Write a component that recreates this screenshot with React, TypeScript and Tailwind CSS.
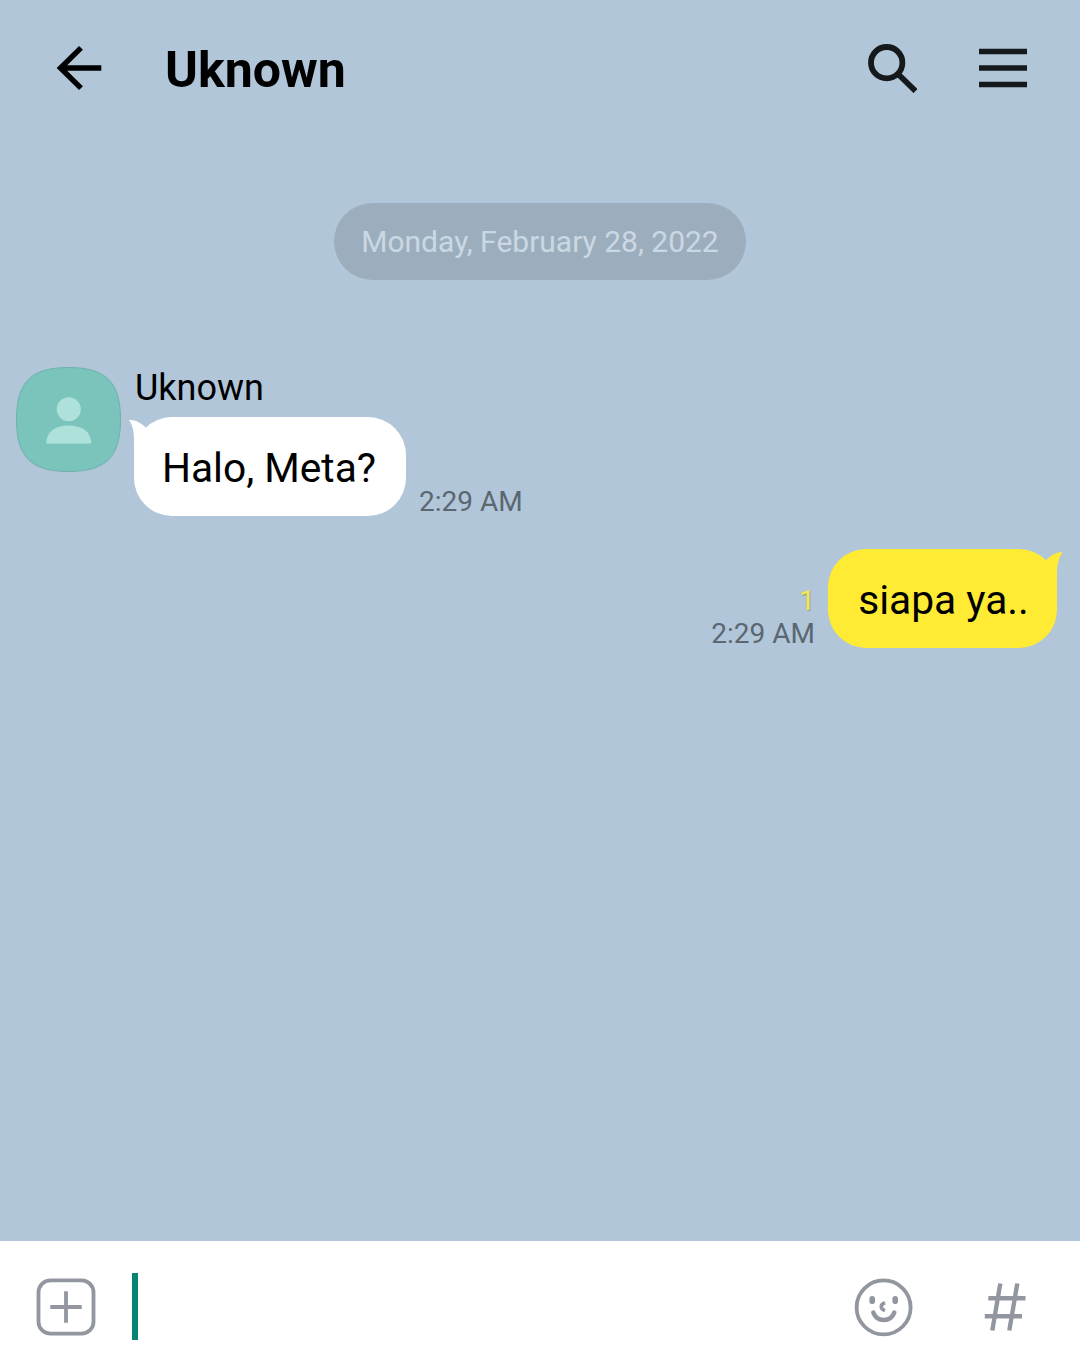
// --- Icons ---
function BackIcon() {
  return (
    <svg width="46" height="46" viewBox="0 0 46 46" fill="none" stroke="#000" strokeWidth="5.4">
      <path d="M45.3 23H5" />
      <path d="M25 2.8L4.5 23 25 43.2" />
    </svg>
  );
}

function SearchIcon() {
  return (
    <svg width="50" height="50" viewBox="0 0 50 50" fill="none" stroke="#16191b" strokeWidth="5.8">
      <circle cx="19.7" cy="19.7" r="15.7" />
      <path d="M31 31l17.5 17" />
    </svg>
  );
}

function MenuIcon() {
  return (
    <svg width="48" height="40" viewBox="0 0 48 40" fill="none" stroke="#16191b" strokeWidth="5.4">
      <path d="M0 3.5h48M0 20h48M0 36.5h48" />
    </svg>
  );
}

function PlusIcon() {
  return (
    <svg width="60" height="58" viewBox="0 0 60 58" fill="none" stroke="#92969f" strokeWidth="3.8">
      <rect x="2.5" y="2.3" width="55" height="53.4" rx="12" />
      <path d="M14.3 29h31.4M30 13.3v31.4" />
    </svg>
  );
}

function EmojiIcon() {
  return (
    <svg width="60" height="60" viewBox="0 0 60 60" fill="none" stroke="#92969f" strokeWidth="3.8" strokeLinecap="round">
      <circle cx="29.6" cy="30.4" r="27" />
      <path d="M18.2 21.8v2.4M41.2 21.8v2.4" strokeWidth="5.6" />
      <path d="M31 25.8c-5 1.8-5 6.2 0 7.8" strokeWidth="3.6" strokeLinecap="butt" />
      <path d="M19.3 35.6c3.7 9.8 17.3 9.8 21 0" strokeWidth="4.4" />
    </svg>
  );
}

function HashIcon() {
  return (
    <svg width="42" height="48" viewBox="0 0 42 48" fill="none" stroke="#92969f" strokeWidth="4.4">
      <path d="M16.3 .5L8.3 47.5M33.3 .5L25.3 47.5" />
      <path d="M4.3 15.2h37.2M.8 33.2H38" />
    </svg>
  );
}

function Avatar() {
  return (
    <svg className="mt-px shrink-0" width="105" height="105" viewBox="0 0 105 105">
      <path
        d="M52.5 .5C90 .5 104.5 15 104.5 52.5S90 104.5 52.5 104.5 .5 90 .5 52.5 15 .5 52.5 .5z"
        fill="#7ac4bb"
        stroke="#6fb0ae"
      />
      <circle cx="52.8" cy="42.2" r="12" fill="#afe1db" />
      <path d="M30.3 76.6c0-12 9-18 22.4-18s22.5 6 22.5 18z" fill="#afe1db" />
    </svg>
  );
}

interface BubbleProps {
  text: string;
  mine?: boolean;
}

function Bubble({ text, mine = false }: BubbleProps) {
  return (
    <div
      className={`relative flex h-[99px] items-center justify-center rounded-[38px] pt-[2px] text-[40.7px] leading-[40px] whitespace-nowrap text-black ${
        mine ? 'w-[229px] bg-[#ffea34] pl-[2px]' : 'w-[272px] bg-white pr-[2px]'
      }`}
    >
      {/* tail */}
      {mine ? (
        <svg className="absolute top-[2px] right-[-6px]" width="20" height="36" viewBox="0 0 20 36" fill="#ffea34">
          <path d="M19.5 1C12.5 1.5 8 4.5 2.5 9.5L0 22l14 14V22c0-8 1.5-14.5 5.5-21z" />
        </svg>
      ) : (
        <svg className="absolute top-[2px] left-[-5px]" width="20" height="36" viewBox="0 0 20 36" fill="#fff">
          <path d="M0 1c7 0 11.5 2.5 16.8 7.5L20 22 5 36V22C5 13 4 7 0 1z" />
        </svg>
      )}
      <span>{text}</span>
    </div>
  );
}

export default function App() {
  return (
    <div className="flex h-[1367px] w-[1080px] flex-col overflow-hidden bg-[#b2c6da] font-['Roboto',sans-serif]">
      {/* --- Header --- */}
      <header className="flex h-[136px] shrink-0 items-center pr-[53px] pl-14">
        <BackIcon />
        <h1 className="ml-[63px] flex-1 pt-[3px] text-[50px] leading-none font-bold text-black">Uknown</h1>
        <SearchIcon />
        <div className="ml-[62px]">
          <MenuIcon />
        </div>
      </header>

      {/* --- Messages --- */}
      <main className="flex flex-1 flex-col pt-[67px]">
        <div className="flex h-[77px] w-[412px] items-center justify-center self-center rounded-full bg-[#9caebd] text-[30px] leading-none whitespace-nowrap text-[#cbd8e4]">
          Monday, February 28, 2022
        </div>

        <div className="mt-[86px] flex pl-4">
          <Avatar />
          <div className="ml-[13px]">
            <div className="flex h-[51px] items-center pb-[7px] pl-px text-[36px] leading-none text-black">Uknown</div>
            <div className="flex items-end">
              <Bubble text="Halo, Meta?" />
              <span className="ml-[13px] text-[28px] leading-[28px] text-[#5a6771]">2:29 AM</span>
            </div>
          </div>
        </div>

        <div className="mt-[33px] flex items-end justify-end pr-[23px]">
          <div className="mr-[13px] flex flex-col items-end text-[28px] text-[#5a6771]">
            <span className="leading-[38px] text-[#f5e750] [text-shadow:1px_1px_1px_#8f9a8c]">1</span>
            <span className="leading-[28px]">2:29 AM</span>
          </div>
          <Bubble text="siapa ya.." mine />
        </div>
      </main>

      {/* --- Input bar --- */}
      <footer className="flex h-[126px] shrink-0 items-center bg-white pt-[6px] pr-[54px] pl-9">
        <PlusIcon />
        <div className="mb-[2px] ml-9 h-[67px] w-[6px] bg-[#078572]" />
        <div className="flex-1" />
        <EmojiIcon />
        <div className="ml-[70px]">
          <HashIcon />
        </div>
      </footer>
    </div>
  );
}
